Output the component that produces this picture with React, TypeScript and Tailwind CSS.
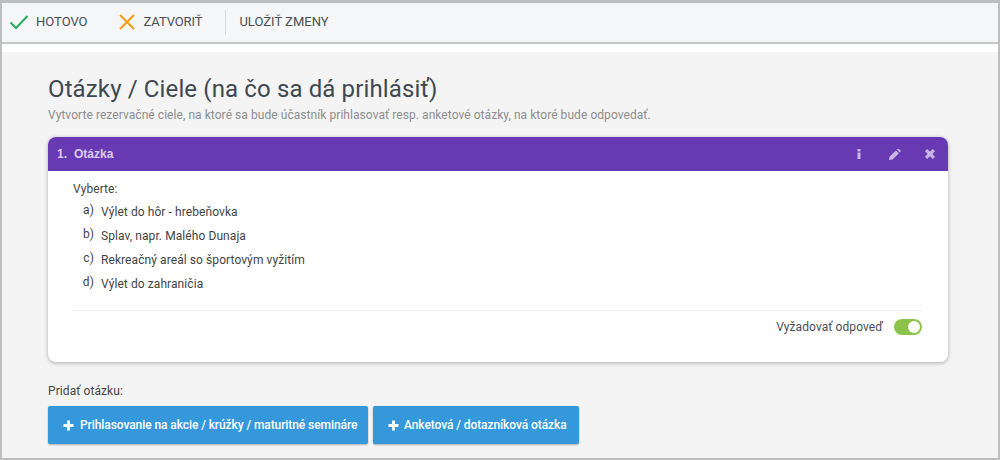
import React from "react";

function Opt({ l, t }: { l: string; t: string }) {
  return (
    <div className="flex h-[24px] items-start">
      <span className="w-[21px] shrink-0 pt-[2px] pr-[7px] text-right text-[12px] leading-[16px] tracking-[0.1px] text-[#444]">{l}</span>
      <span className="pt-[3px] text-[12px] leading-[18px] tracking-[0.08px] text-[#444]">{t}</span>
    </div>
  );
}

function Plus() {
  return (
    <svg width="11" height="11" viewBox="0 0 11 11" className="shrink-0">
      <path d="M4 0.5h3v3.5h3.500v3H7v3.500H4V7H0.500V4H4z" fill="#fff" />
    </svg>
  );
}

export default function App() {
  return (
    <div className="flex h-[460px] w-[1000px] flex-col overflow-hidden border-x-2 border-t-[3px] border-b-2 border-x-[#bdbdbd] border-t-[#bdbdbd] border-b-[#bdbdbd] bg-white font-['Roboto',sans-serif]">
      <div className="flex h-[41px] shrink-0 items-center border-b-2 border-[#c4c6c8] bg-[#f5f6f8] pb-[1px] text-[13px] text-[#4a4f55]">
        <svg width="20" height="16" viewBox="0 0 20 16" className="ml-[7px]" fill="none">
          <path d="M1.500 8.500 7 14 18.500 2" stroke="#27ae60" strokeWidth="2" />
        </svg>
        <span className="ml-[7px]">HOTOVO</span>
        <svg width="16" height="16" viewBox="0 0 16 16" className="ml-[31px]" fill="none">
          <path d="M1 1 15 15M15 1 1 15" stroke="#f39c12" strokeWidth="2" />
        </svg>
        <span className="ml-[9px] tracking-[-0.1px]">ZATVORIŤ</span>
        <div className="ml-[23px] h-[25px] w-px bg-[#d8dadc]" />
        <span className="ml-[13px]">ULOŽIŤ ZMENY</span>
      </div>
      <div className="h-[8px] shrink-0 bg-white" />
      <div className="min-h-0 flex-1 bg-[#f4f4f4] pl-[46px] pr-[50px]">
        <h1 className="mt-[21px] text-[24px] leading-[32px] font-normal tracking-[0.13px] text-[#3f4850]">
          Otázky / Ciele (na čo sa dá prihlásiť)
        </h1>
        <p className="mt-[2px] text-[12px] leading-[16px] tracking-[0.06px] text-[#8d8d8d]">
          Vytvorte rezervačné ciele, na ktoré sa bude účastník prihlasovať resp. anketové otázky, na ktoré bude odpovedať.
        </p>
        <section className="mt-[14px] h-[225px] overflow-hidden rounded-[8px] bg-white shadow-[0_1px_4px_rgba(0,0,0,0.3)]">
          <div className="flex h-[34px] items-center bg-[#673ab3] pl-[9px] pr-[13px] font-['Liberation_Sans',sans-serif] text-[12px] font-bold text-[#d9cdf0]">
            <span className="w-[17px]">1.</span>
            <span>Otázka</span>
            <svg width="4" height="10" viewBox="0 0 4 10" className="ml-auto" fill="#c9b8e6">
              <rect x="0.500" y="0" width="3" height="2.500" />
              <rect x="0.500" y="3.500" width="3" height="6.500" />
            </svg>
            <svg width="12" height="11" viewBox="0 0 12 11" className="ml-[28px]" fill="#c9b8e6">
              <path d="M0 11 0.600 7.600 7 1.400 9.900 4.200 3.500 10.400zM7.900 0.600 8.500 0a1 1 0 0 1 1.300 0l1.700 1.600a1 1 0 0 1 0 1.300l-.7.600z" />
            </svg>
            <svg width="10" height="10" viewBox="0 0 10 10" className="ml-[24px]" fill="#c9b8e6">
              <path d="M2.200 0 5 2.700 7.800 0 10 2.200 7.300 5 10 7.800 7.800 10 5 7.300 2.200 10 0 7.800 2.700 5 0 2.200z" />
            </svg>
          </div>
          <div className="pl-[23px] pr-[26px] pt-[10px]">
            <div className="pl-[2px] text-[12px] leading-[16px] tracking-[0.08px] text-[#444]">Vyberte:</div>
            <div className="mt-[3px] pl-[9px]">
              <Opt l="a)" t="Výlet do hôr - hrebeňovka" />
              <Opt l="b)" t="Splav, napr. Malého Dunaja" />
              <Opt l="c)" t="Rekreačný areál so športovým vyžitím" />
              <Opt l="d)" t="Výlet do zahraničia" />
            </div>
            <div className="ml-px mt-[14px] flex h-[32px] items-center justify-end border-t border-[#f0f0f0]">
              <span className="text-[12px] tracking-[0.08px] text-[#4a4f55]">Vyžadovať odpoveď</span>
              <div className="ml-[11px] flex h-[16px] w-[28px] items-center justify-end rounded-full bg-[#8bc34a] pr-[2px]">
                <div className="h-[12px] w-[12px] rounded-full bg-white" />
              </div>
            </div>
          </div>
        </section>
        <div className="mt-[21px] text-[12px] leading-[16px] tracking-[0.08px] text-[#444]">Pridať otázku:</div>
        <div className="mt-[7px] flex gap-[5px]">
          <button className="flex h-[38px] w-[320px] items-center gap-[6px] rounded-[2px] bg-[#3498db] pl-[15px] text-[12px] font-medium tracking-[-0.08px] text-white shadow-[0_1px_2px_rgba(0,0,0,0.3)]">
            <Plus />
            Prihlasovanie na akcie / krúžky / maturitné semináre
          </button>
          <button className="flex h-[38px] w-[206px] items-center gap-[5px] rounded-[2px] bg-[#3498db] pl-[15px] text-[12px] font-medium tracking-[-0.08px] text-white shadow-[0_1px_2px_rgba(0,0,0,0.3)]">
            <Plus />
            Anketová / dotazníková otázka
          </button>
        </div>
      </div>
    </div>
  );
}
